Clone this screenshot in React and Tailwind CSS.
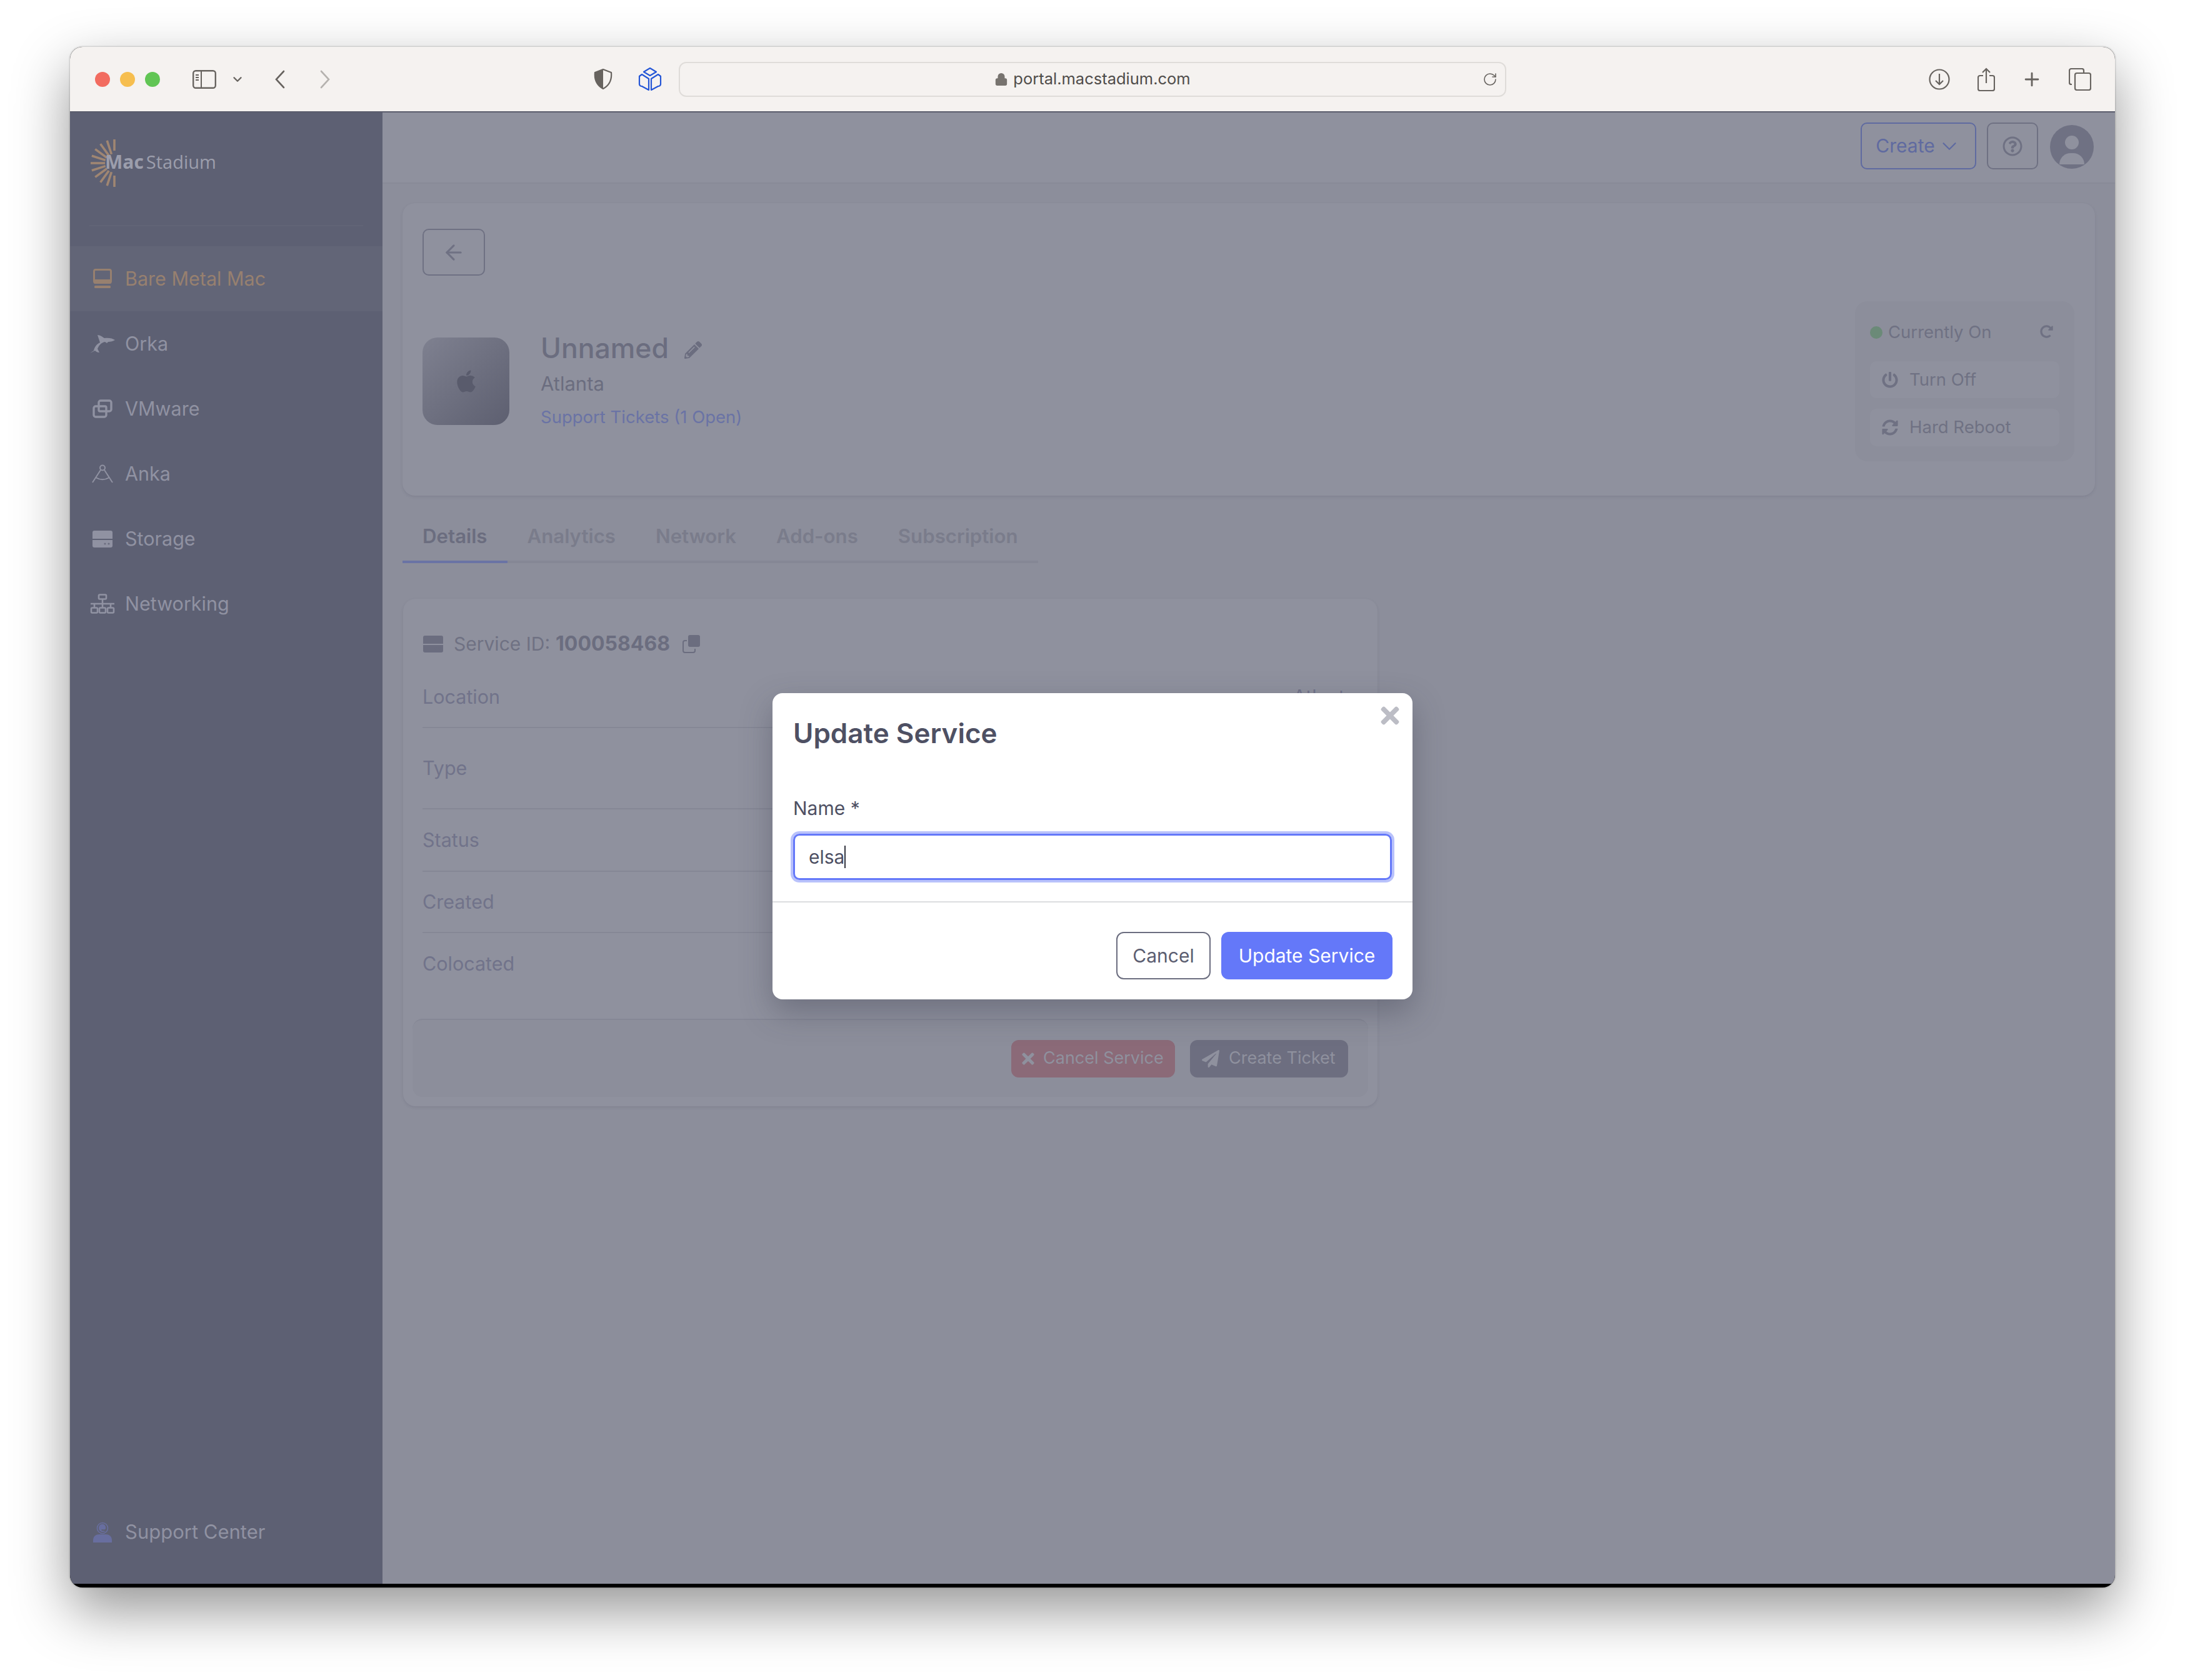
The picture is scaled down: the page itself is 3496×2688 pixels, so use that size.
import { FaApple, FaPencilAlt, FaPowerOff, FaRedoAlt, FaSyncAlt, FaPaperPlane, FaTimes, FaRegQuestionCircle } from 'react-icons/fa';
import { ChevronDown, ArrowLeft, Lock, RotateCw, Plus } from 'lucide-react';

const SunLogo = () => {
    const rays = [];
    for (let i = 0; i <= 10; i++) {
        const a = ((90 + i * 18) * Math.PI) / 180;
        const inner = i === 0 || i === 10 ? 20 : 15;
        rays.push(
            <line
                key={i}
                x1={40 + Math.cos(a) * inner}
                y1={39 + Math.sin(a) * inner}
                x2={40 + Math.cos(a) * 38}
                y2={39 + Math.sin(a) * 38}
                stroke="#a08672"
                strokeWidth="3.6"
            />
        );
    }
    return (
        <svg width="42" height="78" viewBox="0 0 42 78" className="shrink-0">
            {rays}
        </svg>
    );
};

const BareMetalIcon = () => (
    <svg width="30" height="32" viewBox="0 0 30 32" fill="none">
        <rect x="1.5" y="1.5" width="27" height="21" rx="2.5" stroke="#97806f" strokeWidth="3" />
        <rect x="1" y="17" width="28" height="7" rx="2" fill="#97806f" />
        <rect x="2" y="27" width="26" height="4" rx="1.5" fill="#97806f" />
    </svg>
);

const OrkaIcon = () => (
    <svg width="40" height="32" viewBox="0 0 40 32" fill="#9092a2">
        <path d="M0 31l6-4c1-5 4-10 10-13L12 2c4 0 8 3 11 5 6-1 13 0 17 3-3 2-7 3-11 3l-2 2-3-2c-6 1-10 6-12 11l3 6c-3 0-5-1-7-3l-8 4z" />
    </svg>
);

const VmwareIcon = () => (
    <svg width="32" height="30" viewBox="0 0 32 30" fill="none" stroke="#9092a2" strokeWidth="3.4">
        <path d="M10 11V5a3 3 0 0 1 3-3h14a3 3 0 0 1 3 3v11a3 3 0 0 1-3 3h-6" />
        <path d="M22 19v6a3 3 0 0 1-3 3H5a3 3 0 0 1-3-3V14a3 3 0 0 1 3-3h6" />
        <rect x="10" y="11" width="12" height="8" rx="2" />
    </svg>
);

const AnkaIcon = () => (
    <svg width="34" height="30" viewBox="0 0 34 30" fill="none" stroke="#9092a2" strokeWidth="2">
        <circle cx="17" cy="5.5" r="4" />
        <path d="M14 9 1 29M20 9l13 20M6 21c7 4 15 4 22 0" />
    </svg>
);

const StorageIcon = ({ w = 32, color = '#9092a2' }) => (
    <svg width={w} viewBox="0 0 32 27" fill={color}>
        <path d="M3 0h26a3 3 0 0 1 3 3v10H0V3a3 3 0 0 1 3-3z" />
        <path d="M0 15h32v9a3 3 0 0 1-3 3H3a3 3 0 0 1-3-3z" />
        <circle cx="20" cy="21" r="1.6" fill="#6b6d7f" />
        <circle cx="26" cy="21" r="1.6" fill="#6b6d7f" />
    </svg>
);

const NetworkIcon = () => (
    <svg width="40" height="32" viewBox="0 0 40 32" fill="none" stroke="#9092a2" strokeWidth="2.6">
        <rect x="14" y="1.5" width="12" height="7" rx="1.5" />
        <path d="M20 9v7M1 16h38M7 16v6M33 16v6M20 16v6" />
        <rect x="2" y="22.5" width="10" height="8" rx="1.5" />
        <rect x="15" y="22.5" width="10" height="8" rx="1.5" />
        <rect x="28" y="22.5" width="10" height="8" rx="1.5" />
    </svg>
);

const SupportIcon = () => (
    <svg width="30" height="33" viewBox="0 0 30 33" fill="none">
        <circle cx="15" cy="10" r="8.5" stroke="#686e9f" strokeWidth="1.6" />
        <path d="M15 3.5c-4 0-6 3-6 6.5s3 6 6 6c1.500 0 3 0 5-1-2 0-4-1-6-1-1 0-1-2 0-2 2 0 5 1 6-1 1-4-2-7.500-5-7.500z" fill="#686e9f" />
        <path d="M0 33v-4c0-6 5-9 9-9h12c4 0 9 3 9 9v4z" fill="#686e9f" />
    </svg>
);

const SidebarToggle = () => (
    <svg width="38" height="30" viewBox="0 0 38 30" fill="none" stroke="#67635f">
        <rect x="1.2" y="1.2" width="35.6" height="27.6" rx="4" strokeWidth="2.4" />
        <path d="M14 1.500v27" strokeWidth="2" />
        <path d="M5 8h5M5 12h5M5 16h5" strokeWidth="2" />
    </svg>
);

const ShieldIcon = () => (
    <svg width="30" height="33" viewBox="0 0 30 33">
        <path d="M15 1 28 6c1 10-2 20-13 26C4 26 1 16 2 6z" fill="none" stroke="#67635f" strokeWidth="2.2" />
        <path d="M15 1 2 6c-1 10 2 20 13 26z" fill="#67635f" />
    </svg>
);

const BlueCube = () => (
    <svg width="38" height="38" viewBox="0 0 38 38" fill="none" stroke="#2456d6" strokeWidth="2.2" strokeLinejoin="round">
        <path d="M19 1 29 7 19 13 9 7z" />
        <path d="M6 11 17 18v18L6 30a4 4 0 0 1-4-3V14z" />
        <path d="M32 11 21 18v18l11-6a4 4 0 0 0 4-3V14z" />
    </svg>
);

const CopyIcon = () => (
    <svg width="28" height="29" viewBox="0 0 28 29" fill="none">
        <rect x="9" y="0" width="19" height="19" rx="3" fill="#6b6d7f" />
        <path d="M7 9H4a3 3 0 0 0-3 3v13a3 3 0 0 0 3 3h13a3 3 0 0 0 3-3v-3" stroke="#6b6d7f" strokeWidth="2" />
    </svg>
);

const navItems = [
    { label: 'Bare Metal Mac', icon: <BareMetalIcon />, active: true },
    { label: 'Orka', icon: <OrkaIcon /> },
    { label: 'VMware', icon: <VmwareIcon /> },
    { label: 'Anka', icon: <AnkaIcon /> },
    { label: 'Storage', icon: <StorageIcon /> },
    { label: 'Networking', icon: <NetworkIcon /> },
];

const tabs = ['Details', 'Analytics', 'Network', 'Add-ons', 'Subscription'];

const rows = [
    { label: 'Location', value: 'Atlanta', h: 'h-[99px]' },
    { label: 'Type', h: 'h-[130px]' },
    { label: 'Status', h: 'h-[100px]' },
    { label: 'Created', h: 'h-[98px]' },
    { label: 'Colocated', h: 'h-[98px]', last: true },
];

const Toolbar = () => (
    <div className="h-[105px] shrink-0 bg-[#f5f2f0] border-b-2 border-[#5a5c6c] flex items-center pl-[40px] pr-[38px] text-[#67635f]">
        <div className="flex gap-[16px]">
            <span className="w-[24px] h-[24px] rounded-full bg-[#f26c60]" />
            <span className="w-[24px] h-[24px] rounded-full bg-[#f6be4f]" />
            <span className="w-[24px] h-[24px] rounded-full bg-[#61c554]" />
        </div>
        <div className="ml-[52px] flex items-center">
            <SidebarToggle />
        </div>
        <ChevronDown size={22} strokeWidth={2.6} className="ml-[23px]" />
        <svg width="18" height="30" viewBox="0 0 18 30" fill="none" stroke="#67635f" strokeWidth="2.6" strokeLinecap="round" className="ml-[48px]">
            <path d="M15 2 3 15l12 13" />
        </svg>
        <svg width="18" height="30" viewBox="0 0 18 30" fill="none" stroke="#b5b2af" strokeWidth="2.6" strokeLinecap="round" className="ml-[54px]">
            <path d="M3 2l12 13L3 28" />
        </svg>
        <div className="ml-[421px]">
            <ShieldIcon />
        </div>
        <div className="ml-[41px]">
            <BlueCube />
        </div>
        <div className="ml-[27px] w-[1324px] h-[56px] rounded-[12px] border-2 border-[#dfdcd9] flex items-center justify-center relative">
            <Lock size={22} className="mr-[8px] text-[#77736f]" fill="#77736f" />
            <span className="text-[25.5px] text-[#4f4c4a]">portal.macstadium.com</span>
            <RotateCw size={24} strokeWidth={1.6} className="absolute right-[12px] text-[#67635f]" />
        </div>
        <div className="ml-auto flex items-center">
            <svg width="34" height="34" viewBox="0 0 34 34" fill="none" stroke="#67635f" strokeWidth="2.2">
                <circle cx="17" cy="17" r="15.500" />
                <path d="M17 8v17M11 19l6 6 6-6" />
            </svg>
            <svg width="28" height="38" viewBox="0 0 28 38" fill="none" stroke="#67635f" strokeWidth="2.2" className="ml-[44px]">
                <path d="M9 13H4a3 3 0 0 0-3 3v18a3 3 0 0 0 3 3h20a3 3 0 0 0 3-3V16a3 3 0 0 0-3-3h-5" />
                <path d="M14 25V2M8 8l6-6 6 6" />
            </svg>
            <Plus size={34} strokeWidth={2} className="ml-[42px]" />
            <svg width="36" height="36" viewBox="0 0 36 36" fill="none" stroke="#67635f" strokeWidth="2.2" className="ml-[42px]">
                <path d="M5 26H4a3 3 0 0 1-3-3V4a3 3 0 0 1 3-3h17a3 3 0 0 1 3 3v3" />
                <rect x="10" y="8" width="25" height="27" rx="3" />
            </svg>
        </div>
    </div>
);

const Sidebar = () => (
    <aside className="w-[500px] shrink-0 bg-[#5d6073] flex flex-col">
        <div className="mx-[31px] h-[182px] border-b-2 border-[#616476] flex items-start pt-[42px]">
            <SunLogo />
            <div className="ml-[-17px] mt-[19px] text-[#9c9eac] font-['Open_Sans',sans-serif] flex items-baseline">
                <span className="text-[30px] leading-[36px] font-bold">Mac</span>
                <span className="text-[29px] leading-[36px] font-normal ml-[4px]">Stadium</span>
            </div>
        </div>
        <nav className="mt-[32px]">
            {navItems.map((item) => (
                <div
                    key={item.label}
                    className={`h-[104px] flex items-center pl-[31px] ${item.active ? 'bg-[#626577] text-[#97806f]' : 'text-[#9092a2]'}`}
                >
                    <span className="w-[42px] flex justify-center">{item.icon}</span>
                    <span className="ml-[15px] text-[30.5px]">{item.label}</span>
                </div>
            ))}
        </nav>
        <div className="mt-auto mb-[65px] flex items-center pl-[37px] text-[#9092a2]">
            <SupportIcon />
            <span className="ml-[21px] text-[31px] leading-[36px]">Support Center</span>
        </div>
    </aside>
);

const TopCard = () => (
    <section className="h-[468px] mx-[32px] mt-[31px] rounded-[20px] bg-[#8f919e] shadow-[0_2px_4px_rgba(90,92,110,0.2)] flex justify-between">
        <div className="pl-[32px] pt-[41px]">
            <button className="w-[100px] h-[75px] rounded-[10px] border-2 border-[#6f7183] flex items-center justify-center text-[#6f7183]">
                <ArrowLeft size={38} strokeWidth={2} />
            </button>
            <div className="mt-[99px] flex">
                <div className="w-[139px] h-[140px] rounded-[24px] bg-gradient-to-br from-[#7f8190] to-[#5d5f70] flex items-center justify-center text-[#595b6c]">
                    <FaApple size={40} />
                </div>
                <div className="ml-[50px]">
                    <div className="flex items-center text-[#6b6d7f] h-[46px] mt-[-6px]">
                        <span className="text-[44.5px] leading-[46px] font-medium">Unnamed</span>
                        <FaPencilAlt size={28} className="ml-[25px] mt-[6px]" />
                    </div>
                    <div className="text-[31px] leading-[40px] mt-[14px] text-[#6b6d7f]">Atlanta</div>
                    <div className="text-[27.5px] leading-[36px] mt-[15px] text-[#6a73a5]">Support Tickets (1 Open)</div>
                </div>
            </div>
        </div>
        <div className="pr-[33px] pt-[157px]">
            <div className="w-[351px] h-[256px] rounded-[20px] bg-[#8c8e9b] px-[24px] pt-[30px] text-[#6f7183] text-[27.5px]">
                <div className="flex items-center h-[40px]">
                    <span className="w-[20px] h-[20px] rounded-full bg-[#6b8a78]" />
                    <span className="ml-[9px]">Currently On</span>
                    <FaRedoAlt size={21} className="ml-auto mr-[10px] mb-[4px]" />
                </div>
                <div className="mt-[26px] flex flex-col gap-[17px]">
                    <div className="h-[59px] rounded-[10px] bg-[#8f919e] flex items-center pl-[19px]">
                        <FaPowerOff size={26} />
                        <span className="ml-[18px]">Turn Off</span>
                    </div>
                    <div className="h-[60px] rounded-[10px] bg-[#8f919e] flex items-center pl-[19px]">
                        <FaSyncAlt size={26} />
                        <span className="ml-[18px]">Hard Reboot</span>
                    </div>
                </div>
            </div>
        </div>
    </section>
);

const Tabs = () => (
    <div className="mt-[32px] mx-[32px] flex">
        {tabs.map((tab, i) => (
            <div
                key={tab}
                className={`h-[76px] px-[32px] pt-[9px] border-b-4 text-[31.2px] leading-[48px] font-semibold ${
                    i === 0 ? 'border-[#6a73a5] text-[#6b6d7f]' : 'border-[#858795] text-[#7a7c8b]'
                }`}
            >
                {tab}
            </div>
        ))}
    </div>
);

const DetailsCard = () => (
    <section className="w-[1559px] h-[812px] mt-[57px] ml-[33px] rounded-[20px] bg-[#8f919e] shadow-[0_2px_4px_rgba(90,92,110,0.2)] pt-[52px]">
        <div className="px-[32px] flex items-center h-[40px] text-[#6f7183]">
            <StorageIcon color="#6b6d7f" />
            <span className="ml-[17px] text-[30px] leading-[40px]">Service ID:</span>
            <span className="ml-[9px] text-[32px] leading-[40px] font-bold text-[#6b6d7f]">100058468</span>
            <span className="ml-[20px]">
                <CopyIcon />
            </span>
        </div>
        <div className="mt-[16px] mx-[31px]">
            {rows.map((row) => (
                <div
                    key={row.label}
                    className={`${row.h} flex items-center justify-between text-[30.5px] text-[#71738a] ${row.last ? '' : 'border-b-2 border-[#858795]'}`}
                >
                    <span>{row.label}</span>
                    {row.value && <span className="pr-[4px]">{row.value}</span>}
                </div>
            ))}
        </div>
        <div className="mt-[39px] mx-[15px] h-[125px] rounded-[16px] bg-[#8c8e9b] border-t-2 border-[#858795] flex items-center justify-end gap-[24px] pr-[32px] text-[27px] text-[#8f919e]">
            <button className="w-[262px] h-[60px] rounded-[12px] bg-[#8b6a78] flex items-center pl-[13px]">
                <FaTimes size={28} />
                <span className="ml-[10px]">Cancel Service</span>
            </button>
            <button className="w-[253px] h-[60px] rounded-[12px] bg-[#6d6e80] flex items-center pl-[19px]">
                <FaPaperPlane size={28} />
                <span className="ml-[15px]">Create Ticket</span>
            </button>
        </div>
    </section>
);

const UpdateModal = () => (
    <div className="absolute left-[1124px] top-[1034px] w-[1024px] h-[490px] rounded-[16px] bg-white shadow-[0_20px_50px_rgba(50,52,70,0.35)] pt-[40px]">
        <FaTimes size={42} className="absolute right-[15px] top-[15px] text-[#bcbdc5]" />
        <h2 className="mx-[33px] text-[44px] leading-[48px] font-semibold text-[#4e5063]">Update Service</h2>
        <label className="block mx-[33px] mt-[76px] text-[30px] leading-[40px] text-[#4e5063]">Name *</label>
        <div className="mx-[33px] mt-[21px] h-[74px] rounded-[10px] border-[3px] border-[#6478f9] shadow-[0_0_0_4px_#b9c2fb] flex items-center pl-[22px] text-[30px] text-[#4e5063]">
            <span>elsa</span>
            <span className="w-[2px] h-[36px] bg-[#33343f]" />
        </div>
        <div className="mt-[34px] h-[2px] bg-[#dcdde0]" />
        <div className="mt-[47px] mx-[32px] flex justify-end gap-[17px] text-[30px]">
            <button className="w-[151px] h-[76px] rounded-[12px] border-2 border-[#6b6d7f] text-[#5b5d70]">Cancel</button>
            <button className="w-[274px] h-[76px] rounded-[12px] bg-[#6478f9] text-white">Update Service</button>
        </div>
    </div>
);

const App = () => {
    return (
        <div className="w-[3496px] h-[2688px] bg-white pl-[112px] pt-[75px] font-['Inter',sans-serif]">
            <div className="relative w-[3272px] h-[2465px] rounded-[20px] overflow-hidden bg-black shadow-[0_36px_90px_rgba(0,0,0,0.42),0_0_3px_rgba(0,0,0,0.35)] flex flex-col">
                <Toolbar />
                <div className="h-[2354px] flex">
                    <Sidebar />
                    <main className="flex-1 bg-[#8c8e9b]">
                        <header className="h-[114px] bg-[#8f919e] border-b-2 border-[#888a97] flex items-start justify-end pr-[34px] pt-[16px]">
                            <button className="w-[185px] h-[75px] rounded-[10px] border-2 border-[#5f6aa0] flex items-center justify-center text-[#5f6aa0] text-[30px]">
                                Create
                                <ChevronDown size={38} strokeWidth={1.4} className="ml-[4px]" />
                            </button>
                            <button className="ml-[17px] w-[82px] h-[75px] rounded-[10px] border-2 border-[#6f7183] flex items-center justify-center text-[#6f7183]">
                                <FaRegQuestionCircle size={32} />
                            </button>
                            <div className="ml-[19px] mt-[4px] w-[70px] h-[70px] rounded-full bg-[#6f7183] overflow-hidden flex flex-col items-center">
                                <span className="mt-[17px] w-[22px] h-[22px] rounded-full bg-[#8f919e]" />
                                <span className="mt-[6px] w-[40px] h-[18px] rounded-t-full bg-[#8f919e]" />
                            </div>
                        </header>
                        <TopCard />
                        <Tabs />
                        <DetailsCard />
                    </main>
                </div>
                <UpdateModal />
            </div>
        </div>
    );
};

export default App;
